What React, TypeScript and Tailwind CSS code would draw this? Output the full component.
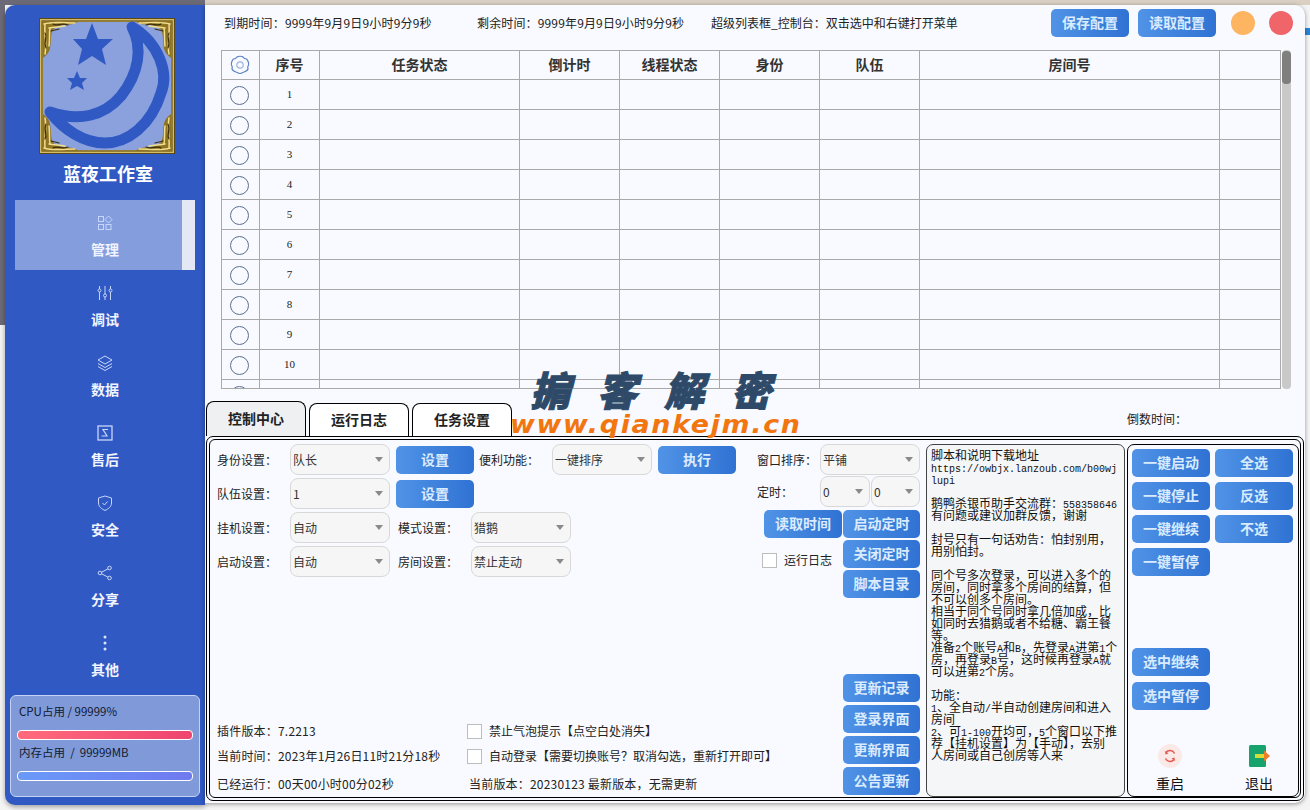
import React from "react";

const cjk = '"Noto Sans CJK SC", "Noto Sans", sans-serif';

function Btn({ children, className = "" }: { children: React.ReactNode; className?: string }) {
  return (
    <div className={"flex items-center justify-center rounded-[5px] bg-gradient-to-r from-[#5093e6] to-[#2f72d3] pb-[1px] text-[14px] font-bold text-[#d9ecff] " + className}>
      {children}
    </div>
  );
}

function Sel({ value, className = "w-[100px]" }: { value: string; className?: string }) {
  return (
    <div className={"flex h-[31px] shrink-0 items-center justify-between rounded-[8px] border border-[#d8d8d8] bg-[#f6f6f6] pl-[2px] pr-[6px] text-[12px] text-[#333] " + className}>
      <span>{value}</span>
      <span className="h-0 w-0 border-x-[4px] border-t-[5px] border-x-transparent border-t-[#8a8a8a]" />
    </div>
  );
}

function Check() {
  return <span className="block h-[15px] w-[15px] shrink-0 border border-[#bdbdbd] bg-white" />;
}

function Row({ children }: { children: React.ReactNode }) {
  return <div className="flex h-[31px] items-center">{children}</div>;
}

function Label({ children, className = "w-[73px]" }: { children: React.ReactNode; className?: string }) {
  return <span className={"shrink-0 text-[12px] text-[#222] " + className}>{children}</span>;
}

function Logo() {
  const corner = (
    <g fill="none" strokeLinecap="round">
      <path d="M3 3 H40 C34 8 26 6 20 8 C14 9 12 14 12 22 C11 30 12 34 4 40 Z" fill="#8f7423" />
      <path d="M5 6 C14 3 26 5 36 5 M6 7 C5 14 8 26 6 36 M10 10 C14 9 20 9 26 8 M11 11 C10 15 11 20 10 28" stroke="#f0dd8e" strokeWidth="1.5" />
      <path d="M14 6 C18 9 22 4 29 7 M6 15 C9 19 4 23 7 30 M12 13 C15 12 17 12 20 11" stroke="#3d2f0a" strokeWidth="1.2" />
    </g>
  );
  return (
    <svg width="136" height="136" viewBox="0 0 136 136" className="shrink-0">
      <rect x="0" y="0" width="136" height="136" fill="#5c4a14" />
      <rect x="1" y="1" width="134" height="134" fill="#d3bb68" />
      <rect x="4" y="4" width="128" height="128" fill="#8ba1dd" />
      <rect x="3" y="3" width="130" height="130" fill="none" stroke="#6b5618" strokeWidth="1.2" />
      <path d="M53 5 L59 21 L74 21 L63 31 L67 47 L53 38 L39 47 L43 31 L34 21 L47 21 Z" fill="#3059c4" />
      <path d="M38 53 L41 60 L48 60 L43 65 L45 72 L38 68 L31 72 L33 65 L28 60 L35 60 Z" fill="#3059c4" />
      <path d="M93 9 C120 25 130 55 122 75 C112 108 88 125 66 125 C45 125 25 112 11 94 C40 104 65 98 82 78 C100 55 104 30 93 9 Z" fill="none" stroke="#3059c4" strokeWidth="11" strokeLinejoin="round" />
      <g>{corner}</g>
      <g transform="translate(136,0) scale(-1,1)">{corner}</g>
      <g transform="translate(0,136) scale(1,-1)">{corner}</g>
      <g transform="translate(136,136) scale(-1,-1)">{corner}</g>
    </svg>
  );
}

const iconProps = { fill: "none", stroke: "#c9d6fb", strokeWidth: 1 } as const;

const navItems: { label: string; icon: React.ReactNode }[] = [
  {
    label: "管理",
    icon: (
      <svg {...iconProps} width={16} height={16} viewBox="0 0 16 16">
        <rect x="1.5" y="1.5" width="5" height="5" />
        <path d="M11.5 1 L15 4.5 L11.5 8 L8 4.5 Z" />
        <rect x="1.5" y="9.5" width="5" height="5" />
        <rect x="9" y="9.5" width="5" height="5" />
      </svg>
    ),
  },
  {
    label: "调试",
    icon: (
      <svg {...iconProps} width={16} height={16} viewBox="0 0 16 16">
        <path d="M2.5 1 V4 M2.5 7 V15 M8 1 V9 M8 12 V15 M13.5 1 V4 M13.5 7 V15" />
        <circle cx="2.5" cy="5.5" r="1.5" />
        <circle cx="8" cy="10.5" r="1.5" />
        <circle cx="13.5" cy="5.5" r="1.5" />
      </svg>
    ),
  },
  {
    label: "数据",
    icon: (
      <svg {...iconProps} width={18} height={18} viewBox="0 0 18 18">
        <path d="M9 2 L16 6 L9 10 L2 6 Z" />
        <path d="M2 9.5 L9 13.5 L16 9.5" />
        <path d="M2 12.5 L9 16.5 L16 12.5" />
      </svg>
    ),
  },
  {
    label: "售后",
    icon: (
      <svg {...iconProps} width={16} height={16} viewBox="0 0 16 16">
        <rect x="1" y="1" width="14" height="14" strokeWidth="1.3" />
        <path d="M11 4.5 H6 L10 11 H4.5" strokeWidth="1.2" />
      </svg>
    ),
  },
  {
    label: "安全",
    icon: (
      <svg {...iconProps} width={16} height={16} viewBox="0 0 16 16">
        <path d="M8 1 L14.5 3 V8 C14.5 12 11 14 8 15.5 C5 14 1.5 12 1.5 8 V3 Z" />
        <path d="M5.5 8 L7.5 10 L10.5 6.5" />
      </svg>
    ),
  },
  {
    label: "分享",
    icon: (
      <svg {...iconProps} width={16} height={16} viewBox="0 0 16 16">
        <circle cx="12.5" cy="3" r="1.8" />
        <circle cx="3" cy="8" r="1.8" />
        <circle cx="12.5" cy="13" r="1.8" />
        <path d="M4.6 7.2 L10.9 3.9 M4.6 8.8 L10.9 12.1" />
      </svg>
    ),
  },
  {
    label: "其他",
    icon: (
      <svg width={16} height={16} viewBox="0 0 16 16" fill="#dbe5ff">
        <circle cx="8" cy="2" r="1.5" />
        <circle cx="8" cy="8" r="1.5" />
        <circle cx="8" cy="14" r="1.5" />
      </svg>
    ),
  },
];

function Sidebar() {
  return (
    <aside className="flex h-[800px] w-[200px] shrink-0 flex-col items-center rounded-l-[10px] bg-[#3059c4] shadow-[0_2px_5px_rgba(0,0,0,0.35)]">
      <div className="ml-[4px] mt-[13px]">
        <Logo />
      </div>
      <div className="ml-[6px] mt-[6px] text-[18px] font-bold leading-[26px] text-white">蓝夜工作室</div>
      <nav className="mt-[14px] flex w-[180px] flex-col">
        {navItems.map((n, i) => (
          <div
            key={n.label}
            className={"flex h-[70px] flex-col items-center pt-[15px] " + (i === 0 ? "border-r-[13px] border-[#e4e8f4] bg-[#839ddd] pl-[13px]" : "")}
          >
            <div className="flex h-[16px] items-center justify-center">{n.icon}</div>
            <div className="mt-[8px] text-[14px] font-bold leading-[20px] text-[#f0f4ff]">{n.label}</div>
          </div>
        ))}
      </nav>
      <div className="mt-[5px] h-[102px] w-[190px] rounded-[6px] border border-[#c5d2f2] bg-[#8099d8] px-[6px] pt-[7px] text-[11.5px] text-[#111a33]">
        <div className="pl-[2px] leading-[16px]">CPU占用 / 99999%</div>
        <div className="mt-[11px] h-[10px] rounded-[4px] border border-white bg-gradient-to-r from-[#ff6b7c] to-[#ee4470]" />
        <div className="mt-[4px] pl-[2px] leading-[16px]">内存占用&nbsp; /&nbsp; 99999MB</div>
        <div className="mt-[11px] h-[10px] rounded-[4px] border border-white bg-gradient-to-r from-[#6a9af8] to-[#6f79ef]" />
      </div>
    </aside>
  );
}

const cols = [38, 60, 200, 100, 100, 100, 100, 300, 61];
const heads = ["", "序号", "任务状态", "倒计时", "线程状态", "身份", "队伍", "房间号", ""];

function Gear() {
  return (
    <svg width="20" height="20" viewBox="0 0 20 20" fill="none" stroke="#5b80c4" strokeWidth="1.2" className="ml-[8px]">
      <path d="M7 2 C8 1 12 1 13 2 C14 3.5 15 4 16.5 4 C18 5 19 8.5 18.5 10 C17.5 11.5 17.5 12.5 18 14 C17.5 15.5 15 17 14 17 C13 17 12 18.5 10 18.5 C8 18.5 7 17 6 17 C5 17 2.5 15.5 2 14 C2.5 12.5 2.5 11.5 1.5 10 C1 8.5 2 5 3.5 4 C5 4 6 3.5 7 2 Z" strokeLinejoin="round" />
      <circle cx="10" cy="10" r="3.2" stroke="#9cb3de" />
    </svg>
  );
}

function GridTable() {
  const rows = Array.from({ length: 11 }, (_, i) => i + 1);
  return (
    <div className="ml-[16px] mt-[10px] flex h-[339px] w-[1070px]">
      <div className="h-full w-[1060px] overflow-hidden border-b border-[#a9a9a9]">
        <table className="w-[1060px] table-fixed border-collapse">
          <colgroup>
            {cols.map((c, i) => (
              <col key={i} style={{ width: c }} />
            ))}
          </colgroup>
          <thead>
            <tr className="h-[29px]">
              {heads.map((h, i) => (
                <th key={i} className="border border-[#a9a9a9] p-0 pb-[1px] text-center text-[14px] font-bold text-[#333]">
                  {i === 0 ? <Gear /> : h}
                </th>
              ))}
            </tr>
          </thead>
          <tbody>
            {rows.map((r) => (
              <tr key={r} className="h-[30px]">
                <td className="border border-[#a9a9a9] p-0">
                  <span className="ml-[8px] mt-[1px] block h-[19px] w-[19px] rounded-full border border-[#5a7090]" />
                </td>
                <td className="border border-[#a9a9a9] p-0 text-center text-[11px] text-[#222] [font-family:'Liberation_Serif',serif]">{r}</td>
                {cols.slice(2).map((_, i) => (
                  <td key={i} className="border border-[#a9a9a9] p-0" />
                ))}
              </tr>
            ))}
          </tbody>
        </table>
      </div>
      <div className="ml-[1px] h-full w-[9px] rounded-[4px] bg-[#c9c9c9] pt-[1px]">
        <div className="h-[33px] w-[9px] rounded-[4px] bg-[#7f7f7f]" />
      </div>
    </div>
  );
}

function Tabs() {
  const tabs = ["控制中心", "运行日志", "任务设置"];
  return (
    <div className="mt-[12px] flex h-[35px] items-end pl-[1px]">
      {tabs.map((t, i) => (
        <div
          key={t}
          className={
            "mr-[3px] flex w-[100px] items-center justify-center rounded-t-[8px] border border-b-0 border-black pb-[2px] text-[14px] font-bold text-[#222] " +
            (i === 0 ? "h-[35px] bg-[#eef0f2]" : "h-[33px] bg-white")
          }
        >
          {t}
        </div>
      ))}
      <span className="ml-[612px] self-center text-[12px] text-[#222]">倒数时间：</span>
    </div>
  );
}

function Mono({ children }: { children: React.ReactNode }) {
  return <span className="text-[10px] [font-family:'Liberation_Mono',monospace]">{children}</span>;
}

const info: React.ReactNode[] = [
  "脚本和说明下载地址",
  <Mono>https://owbjx.lanzoub.com/b00wj</Mono>,
  <Mono>lupi</Mono>,
  "",
  <>鹅鸭杀银币助手交流群：<Mono>558358646</Mono></>,
  "有问题或建议加群反馈，谢谢",
  "",
  "封号只有一句话劝告：怕封别用，",
  "用别怕封。",
  "",
  "同个号多次登录，可以进入多个的",
  "房间，同时拿多个房间的结算，但",
  "不可以创多个房间。",
  "相当于同个号同时拿几倍加成，比",
  "如同时去猎鹅或者不给糖、霸王餐",
  "等。",
  <>准备<Mono>2</Mono>个账号<Mono>A</Mono>和<Mono>B</Mono>，先登录<Mono>A</Mono>进第<Mono>1</Mono>个</>,
  <>房，再登录<Mono>B</Mono>号，这时候再登录<Mono>A</Mono>就</>,
  <>可以进第<Mono>2</Mono>个房。</>,
  "",
  "功能：",
  <><Mono>1</Mono>、全自动<Mono>/</Mono>半自动创建房间和进入</>,
  "房间",
  <><Mono>2</Mono>、可<Mono>1-100</Mono>开均可，<Mono>5</Mono>个窗口以下推</>,
  "荐【挂机设置】为【手动】，去别",
  "人房间或自己创房等人来",
];

function InfoBox() {
  return (
    <div className="h-[353px] w-[199px] shrink-0 rounded-[7px] border border-[#444] bg-[#f5f6f8] pl-[4px] pt-[4px] text-[12px] leading-[12px] text-[#111]">
      {info.map((l, i) => (
        <div key={i} className="h-[12px] whitespace-nowrap leading-[12px]">
          {l}
        </div>
      ))}
    </div>
  );
}

function ActionBox() {
  return (
    <div className="ml-[2px] flex h-[353px] w-[172px] shrink-0 flex-col rounded-[7px] border border-black px-[4px] pt-[4px]">
      <div className="flex gap-[5px]">
        <div className="flex w-[78px] flex-col gap-[5px]">
          {["一键启动", "一键停止", "一键继续", "一键暂停"].map((t) => (
            <Btn key={t} className="h-[28px] w-[78px]">{t}</Btn>
          ))}
        </div>
        <div className="flex w-[78px] flex-col gap-[5px]">
          {["全选", "反选", "不选"].map((t) => (
            <Btn key={t} className="h-[28px] w-[78px]">{t}</Btn>
          ))}
        </div>
      </div>
      <div className="mt-[72px] flex w-[78px] flex-col gap-[6px]">
        <Btn className="h-[28px] w-[78px]">选中继续</Btn>
        <Btn className="h-[28px] w-[78px]">选中暂停</Btn>
      </div>
      <div className="mt-[33px] flex">
        <div className="flex w-[78px] flex-col items-center">
          <svg width="26" height="26" viewBox="0 0 26 26" fill="none">
            <circle cx="13" cy="13" r="12" fill="#fbe9e7" />
            <path d="M9 9.5 A5 5 0 0 1 17.5 10.5 M17 16.5 A5 5 0 0 1 8.5 15.5" stroke="#e8574f" strokeWidth="1.5" />
            <path d="M8 8 L8.5 11.5 L11.5 10.5 Z M18 18 L17.5 14.5 L14.5 15.5 Z" fill="#e8574f" />
          </svg>
          <span className="mt-[4px] text-[14px] leading-[20px] text-[#111]">重启</span>
        </div>
        <div className="ml-[10px] flex w-[78px] flex-col items-center">
          <svg width="26" height="26" viewBox="0 0 26 26" className="ml-[6px]">
            <rect x="3" y="2" width="17" height="22" rx="1.5" fill="#16a36e" />
            <rect x="9" y="11" width="10" height="4" fill="#d6dc35" />
            <path d="M18 7.5 L24 13 L18 18.5 Z" fill="#ee7d28" />
          </svg>
          <span className="ml-[6px] mt-[4px] text-[14px] leading-[20px] text-[#111]">退出</span>
        </div>
      </div>
    </div>
  );
}

function FormArea() {
  return (
    <div className="flex h-[353px] w-[716px] shrink-0 pl-[7px]">
      <div className="flex w-[540px] shrink-0 flex-col justify-between">
        <div className="flex flex-col gap-[3px]">
          <Row>
            <Label>身份设置：</Label>
            <Sel value="队长" />
            <Btn className="ml-[6px] h-[28px] w-[78px]">设置</Btn>
            <Label className="ml-[5px] w-[73px]">便利功能：</Label>
            <Sel value="一键排序" />
            <Btn className="ml-[6px] h-[28px] w-[78px]">执行</Btn>
          </Row>
          <Row>
            <Label>队伍设置：</Label>
            <Sel value="1" />
            <Btn className="ml-[6px] h-[28px] w-[78px]">设置</Btn>
          </Row>
          <Row>
            <Label>挂机设置：</Label>
            <Sel value="自动" />
            <Label className="ml-[8px] w-[73px]">模式设置：</Label>
            <Sel value="猎鹅" />
          </Row>
          <Row>
            <Label>启动设置：</Label>
            <Sel value="自动" />
            <Label className="ml-[8px] w-[73px]">房间设置：</Label>
            <Sel value="禁止走动" />
          </Row>
        </div>
        <div className="flex flex-col whitespace-nowrap text-[12px] text-[#222]">
          <div className="flex h-[20px] items-center">
            <span className="w-[250px] shrink-0 tracking-[0.2px]">插件版本：7.2213</span>
            <Check />
            <span className="ml-[7px]">禁止气泡提示【点空白处消失】</span>
          </div>
          <div className="flex h-[30px] items-center">
            <span className="w-[250px] shrink-0 tracking-[0.2px]">当前时间：2023年1月26日11时21分18秒</span>
            <Check />
            <span className="ml-[7px]">自动登录【需要切换账号？取消勾选，重新打开即可】</span>
          </div>
          <div className="flex h-[26px] items-center">
            <span className="w-[252px] shrink-0 tracking-[0.2px]">已经运行：00天00小时00分02秒</span>
            <span className="tracking-[0.2px]">当前版本：20230123 最新版本，无需更新</span>
          </div>
        </div>
      </div>
      <div className="flex w-[163px] shrink-0 flex-col justify-between pb-[2px]">
        <div>
          <Row>
            <Label className="w-[63px]">窗口排序：</Label>
            <Sel value="平铺" />
          </Row>
          <div className="mt-[1px]">
            <Row>
              <Label className="w-[63px]">定时：</Label>
              <Sel value="0" className="w-[50px]" />
              <Sel value="0" className="ml-[1px] w-[49px]" />
            </Row>
          </div>
          <div className="mt-[3px] flex">
            <div className="w-[86px]">
              <Btn className="ml-[7px] h-[28px] w-[78px]">读取时间</Btn>
              <div className="ml-[5px] mt-[13px] flex items-center">
                <Check />
                <span className="ml-[7px] text-[12px] text-[#222]">运行日志</span>
              </div>
            </div>
            <div className="flex w-[77px] flex-col gap-[2px]">
              <Btn className="h-[28px] w-[77px]">启动定时</Btn>
              <Btn className="h-[28px] w-[77px]">关闭定时</Btn>
              <Btn className="h-[28px] w-[77px]">脚本目录</Btn>
            </div>
          </div>
        </div>
        <div className="ml-[86px] flex w-[77px] flex-col gap-[3px]">
          {["更新记录", "登录界面", "更新界面", "公告更新"].map((t) => (
            <Btn key={t} className="h-[28px] w-[77px]">{t}</Btn>
          ))}
        </div>
      </div>
    </div>
  );
}

function TopBar() {
  return (
    <div className="flex h-[35px] shrink-0 items-center pl-[19px] text-[12px] text-[#222]">
      <span className="w-[253px] tracking-[0.18px]">到期时间：9999年9月9日9小时9分9秒</span>
      <span className="w-[234px] tracking-[0.15px]">剩余时间：9999年9月9日9小时9分9秒</span>
      <span className="w-[340px]">超级列表框_控制台：双击选中和右键打开菜单</span>
      <Btn className="h-[28px] w-[78px]">保存配置</Btn>
      <Btn className="ml-[9px] h-[28px] w-[78px]">读取配置</Btn>
      <span className="ml-[15px] h-[24px] w-[24px] rounded-full bg-[#fdb562]" />
      <span className="ml-[14px] h-[24px] w-[24px] rounded-full bg-[#f0656a]" />
    </div>
  );
}

export default function App() {
  return (
    <div className="relative h-[810px] w-[1310px] overflow-hidden bg-[#f4f4f4] pl-[5px] pt-[5px]" style={{ fontFamily: cjk }}>
      <div className="absolute left-0 top-0 h-[325px] w-[5px] bg-[#6d6a78]" />
      <div className="absolute left-0 top-0 h-[5px] w-[205px] bg-[#6d6a78]" />
      <div className="absolute left-[205px] top-0 h-[5px] w-[1105px] bg-[#d9cfc2]" />
      <div className="absolute left-[1305px] top-[28px] h-[7px] w-[5px] bg-[#2a85d6]" />
      <div className="relative flex">
        <Sidebar />
        <main className="flex h-[798px] w-[1100px] shrink-0 flex-col rounded-r-[10px] bg-[#f8faff] shadow-[0_1px_4px_rgba(0,0,0,0.4)]">
          <TopBar />
          <GridTable />
          <Tabs />
          <section className="ml-[1px] h-[365px] w-[1098px] rounded-[7px] border border-black p-[2px]">
            <div className="flex h-full rounded-[6px] border border-black pt-[4px]">
              <FormArea />
              <InfoBox />
              <ActionBox />
            </div>
          </section>
        </main>
      </div>
      <div className="absolute left-[530px] top-[366px] whitespace-nowrap text-[40px] font-black italic leading-[46px] tracking-[27px] text-[#2e4a68] [-webkit-text-stroke:1px_#2e4a68]">掮客解密</div>
      <div className="absolute left-[510px] top-[412px] origin-left scale-x-[1.12] whitespace-nowrap text-[24px] font-bold italic leading-[26px] tracking-[1.5px] text-[#f2760f] [font-family:'DejaVu_Sans',sans-serif]">www.qiankejm.cn</div>
    </div>
  );
}
